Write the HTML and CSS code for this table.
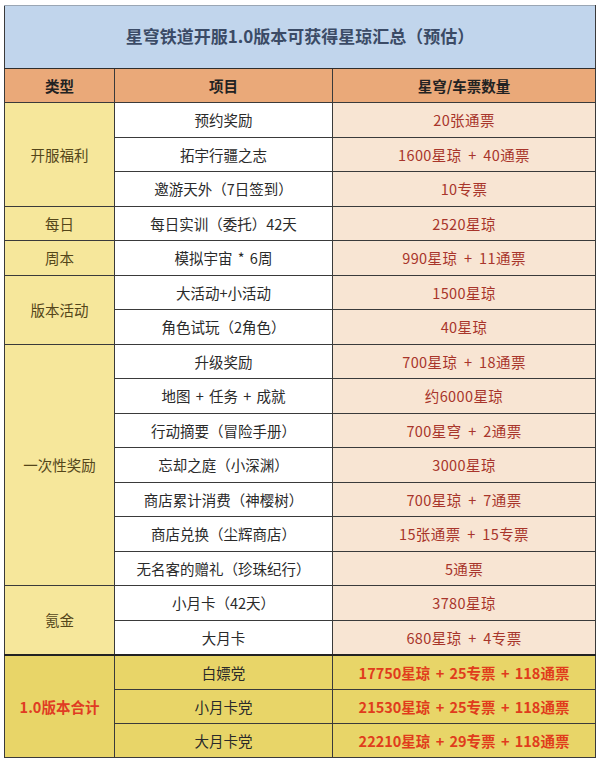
FILE: index.html
```html
<!DOCTYPE html>
<html lang="zh-CN">
<head>
<meta charset="utf-8">
<link rel="stylesheet" href="styles.css">
</head>
<body>
<div class="page">
<table class="sheet">
  <colgroup><col class="c1"><col class="c2"><col class="c3"></colgroup>
  <tr class="title-row"><td colspan="3" class="title">星穹铁道开服1.0版本可获得星琼汇总（预估）</td></tr>
  <tr class="head"><th>类型</th><th>项目</th><th>星穹/车票数量</th></tr>
  <tr><td class="cat" rowspan="3">开服福利</td><td class="item">预约奖励</td><td class="val">20张通票</td></tr>
  <tr><td class="item">拓宇行疆之志</td><td class="val">1600星琼 + 40通票</td></tr>
  <tr><td class="item">邀游天外（7日签到）</td><td class="val">10专票</td></tr>
  <tr><td class="cat">每日</td><td class="item">每日实训（委托）42天</td><td class="val">2520星琼</td></tr>
  <tr><td class="cat">周本</td><td class="item">模拟宇宙 * 6周</td><td class="val">990星琼 + 11通票</td></tr>
  <tr><td class="cat" rowspan="2">版本活动</td><td class="item">大活动+小活动</td><td class="val">1500星琼</td></tr>
  <tr><td class="item">角色试玩（2角色）</td><td class="val">40星琼</td></tr>
  <tr><td class="cat" rowspan="7">一次性奖励</td><td class="item">升级奖励</td><td class="val">700星琼 + 18通票</td></tr>
  <tr><td class="item">地图 + 任务 + 成就</td><td class="val">约6000星琼</td></tr>
  <tr><td class="item">行动摘要（冒险手册）</td><td class="val">700星穹 + 2通票</td></tr>
  <tr><td class="item">忘却之庭（小深渊）</td><td class="val">3000星琼</td></tr>
  <tr><td class="item">商店累计消费（神樱树）</td><td class="val">700星琼 + 7通票</td></tr>
  <tr><td class="item">商店兑换（尘辉商店）</td><td class="val">15张通票 + 15专票</td></tr>
  <tr><td class="item">无名客的赠礼（珍珠纪行）</td><td class="val">5通票</td></tr>
  <tr><td class="cat" rowspan="2">氪金</td><td class="item">小月卡（42天）</td><td class="val">3780星琼</td></tr>
  <tr><td class="item">大月卡</td><td class="val">680星琼 + 4专票</td></tr>
  <tr class="total first"><td class="tcat" rowspan="3">1.0版本合计</td><td class="titem">白嫖党</td><td class="tval">17750星琼 + 25专票 + 118通票</td></tr>
  <tr class="total"><td class="titem">小月卡党</td><td class="tval">21530星琼 + 25专票 + 118通票</td></tr>
  <tr class="total"><td class="titem">大月卡党</td><td class="tval">22210星琼 + 29专票 + 118通票</td></tr>
</table>
</div>
</body>
</html>
```
FILE: styles.css
```css
html, body { margin: 0; padding: 0; background: #ffffff; }
body { font-family: "Noto Sans CJK SC", "Noto Sans", sans-serif; }
.page { padding: 5px 5px 0 4px; }
.sheet {
  width: 591px;
  border-collapse: collapse;
  table-layout: fixed;
  border-left: 1.5px solid #3a3a3a;
  border-right: 1.5px solid #3a3a3a;
  border-bottom: 1.5px solid #3a3a3a;
}
.c1 { width: 110px; }
.c2 { width: 218px; }
.c3 { width: 263px; }
.sheet td, .sheet th {
  border: 1.5px solid #3a3a3a;
  text-align: center;
  vertical-align: middle;
  padding: 0;
  font-size: 14.5px;
  height: 33.5px;
  line-height: 1.2;
}
.title-row td {
  height: 60px;
  background: #c1d5ec;
  color: #3b4b66;
  font-size: 17px;
  font-weight: 700;
  border-top: 1px solid #9aa6b4;
  border-bottom: 1.5px solid #2e2e2e;
  padding-bottom: 2px;
}
.head th {
  height: 33px;
  background: #eaa979;
  color: #222;
  font-weight: 700;
  font-size: 14.5px;
}
.cat {
  background: #f6e79b;
  color: #54461a;
  font-size: 15px;
}
.item { background: #ffffff; color: #2a2a2a; word-spacing: 2px; }
.val { background: #f8e5d3; color: #a8352b; word-spacing: 3px; letter-spacing: 0.4px; }
.total td { background: #e8d568; height: 33px; }
.total.first td { border-top: 2.5px solid #222; }
.tcat { color: #e03c23; font-weight: 700; font-size: 15px; }
.titem { color: #2a2a2a; font-size: 15px; }
.tval { color: #e03c1c; font-weight: 700; font-size: 15px; word-spacing: 2px; }
```
